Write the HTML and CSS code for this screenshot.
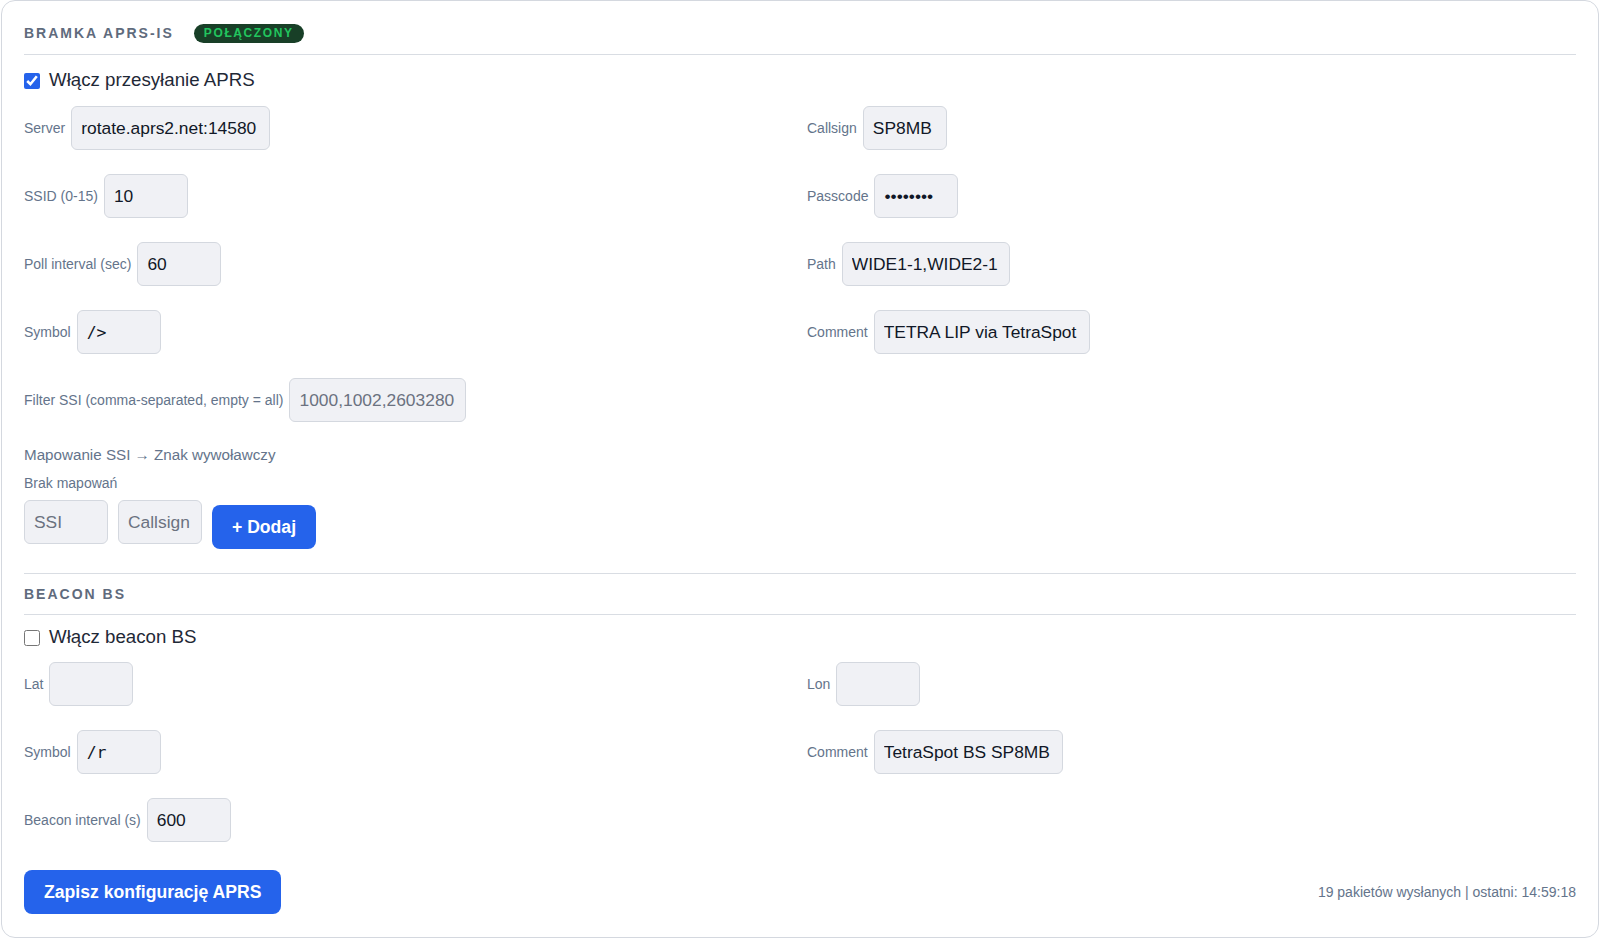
FILE: index.html
```html
<!DOCTYPE html>
<html lang="pl">

<head>
    <meta charset="UTF-8">
    <title>APRS</title>
    <link rel="stylesheet" href="styles.css">
</head>

<body>
    <div class="card">
        <div class="section-head">
            <span class="section-title">Bramka APRS-IS</span>
            <span class="badge">Połączony</span>
        </div>

        <label class="check-row">
            <input type="checkbox" checked>
            <span>Włącz przesyłanie APRS</span>
        </label>

        <div class="fields">
            <div class="field">
                <label>Server</label>
                <input type="text" class="w-server" value="rotate.aprs2.net:14580">
            </div>
            <div class="field">
                <label>Callsign</label>
                <input type="text" class="w-sm" value="SP8MB">
            </div>
            <div class="field">
                <label>SSID (0-15)</label>
                <input type="number" class="w-sm" value="10">
            </div>
            <div class="field">
                <label>Passcode</label>
                <input type="password" class="w-sm" value="12345678">
            </div>
            <div class="field">
                <label>Poll interval (sec)</label>
                <input type="number" class="w-sm" value="60">
            </div>
            <div class="field">
                <label>Path</label>
                <input type="text" class="w-path" value="WIDE1-1,WIDE2-1">
            </div>
            <div class="field">
                <label>Symbol</label>
                <input type="text" class="w-sm mono" value="/&gt;">
            </div>
            <div class="field">
                <label>Comment</label>
                <input type="text" class="w-comment" value="TETRA LIP via TetraSpot">
            </div>
            <div class="field">
                <label>Filter SSI (comma-separated, empty = all)</label>
                <input type="text" class="w-filter" placeholder="1000,1002,2603280">
            </div>
        </div>

        <div class="mapping">
            <div class="mapping-title">Mapowanie SSI &rarr; Znak wywoławczy</div>
            <div class="mapping-empty">Brak mapowań</div>
            <div class="mapping-add">
                <input type="text" class="w-sm" placeholder="SSI">
                <input type="text" class="w-sm" placeholder="Callsign">
                <button class="btn btn-add">+ Dodaj</button>
            </div>
        </div>

        <div class="section-head section-split">
            <span class="section-title">Beacon BS</span>
        </div>

        <label class="check-row check-beacon">
            <input type="checkbox">
            <span>Włącz beacon BS</span>
        </label>

        <div class="fields">
            <div class="field">
                <label>Lat</label>
                <input type="text" class="w-sm">
            </div>
            <div class="field">
                <label>Lon</label>
                <input type="text" class="w-sm">
            </div>
            <div class="field">
                <label>Symbol</label>
                <input type="text" class="w-sm mono" value="/r">
            </div>
            <div class="field">
                <label>Comment</label>
                <input type="text" class="w-beacon" value="TetraSpot BS SP8MB">
            </div>
            <div class="field">
                <label>Beacon interval (s)</label>
                <input type="number" class="w-sm" value="600">
            </div>
        </div>

        <div class="footer">
            <button class="btn">Zapisz konfigurację APRS</button>
            <span class="status">19 pakietów wysłanych | ostatni: 14:59:18</span>
        </div>
    </div>
</body>

</html>
```

FILE: styles.css
```css
body {
    margin: 0;
    background: #fff;
    font-family: "Liberation Sans", Arial, sans-serif;
    color: #1f2937;
}

.card {
    margin: 0 1px 1px;
    padding: 22px 22px 23px;
    border: 1px solid #d4d8df;
    border-radius: 14px;
    background: #fff;
}

.section-head {
    display: flex;
    align-items: center;
    gap: 20px;
    height: 20px;
    padding-bottom: 11px;
    border-bottom: 1px solid #d9dde3;
}

.section-split {
    margin-top: 24px;
    padding-top: 11px;
    height: 17px;
    padding-bottom: 12px;
    border-top: 1px solid #d9dde3;
}

.section-title {
    font-size: 14px;
    font-weight: bold;
    letter-spacing: 2px;
    text-transform: uppercase;
    color: #5f6b7d;
}

.badge {
    padding: 0 10px;
    height: 19px;
    line-height: 19px;
    border-radius: 10px;
    background: #183f27;
    color: #22c55e;
    font-size: 12px;
    font-weight: bold;
    letter-spacing: 1.6px;
    text-transform: uppercase;
}

.check-row {
    display: flex;
    align-items: center;
    gap: 9px;
    margin-top: 14px;
    height: 22px;
    font-size: 18.7px;
    color: #1f2937;
}

.check-beacon {
    margin-top: 11px;
}

.check-row input {
    width: 16px;
    height: 16px;
    margin: 2px 0 0;
    accent-color: #2563eb;
}

.fields {
    display: grid;
    grid-template-columns: 1fr 1fr;
    column-gap: 14px;
    row-gap: 24px;
    margin-top: 15px;
}

.check-beacon + .fields {
    margin-top: 14px;
}

.field {
    display: flex;
    align-items: center;
    gap: 6px;
}

.field label {
    font-size: 14px;
    color: #64748b;
}

input[type="text"],
input[type="number"],
input[type="password"] {
    box-sizing: border-box;
    height: 44px;
    padding: 0 9px;
    border: 1px solid #d4d8df;
    border-radius: 6px;
    background: #f0f1f5;
    font-family: "Liberation Sans", Arial, sans-serif;
    font-size: 17.4px;
    color: #111827;
    outline: none;
}

input::placeholder {
    color: #6b7280;
}

input[type="number"]::-webkit-inner-spin-button {
    display: none;
}

input.mono {
    font-family: "DejaVu Sans Mono", monospace;
    font-size: 16.5px;
}

.w-sm { width: 84px; }
.w-server { width: 199px; }
.w-path { width: 168px; }
.w-comment { width: 216px; }
.w-beacon { width: 189px; }
.w-filter { width: 177px; }

.mapping {
    margin-top: 24px;
}

.mapping-title {
    font-size: 15.2px;
    line-height: 18px;
    color: #64748b;
}

.mapping-empty {
    margin-top: 11px;
    font-size: 14px;
    line-height: 17px;
    color: #64748b;
}

.mapping-add {
    display: flex;
    align-items: flex-start;
    gap: 10px;
    margin-top: 8px;
}

.btn {
    height: 44px;
    padding: 0 20px;
    border: none;
    border-radius: 8px;
    background: #2563eb;
    color: #fff;
    font-family: "Liberation Sans", Arial, sans-serif;
    font-size: 17.6px;
    font-weight: bold;
}

.btn-add {
    margin-top: 5px;
}

.footer {
    display: flex;
    justify-content: space-between;
    align-items: center;
    margin-top: 28px;
}

.status {
    font-size: 14px;
    color: #64748b;
}
```
